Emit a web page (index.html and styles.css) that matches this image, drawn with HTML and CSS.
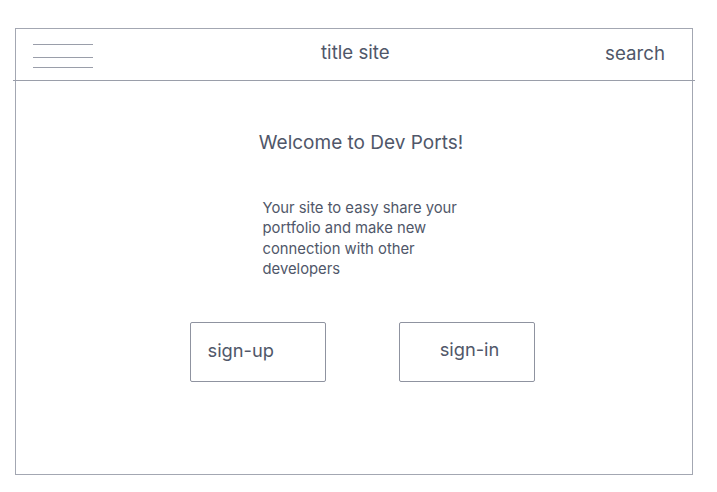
FILE: index.html
```html
<!DOCTYPE html>
<html>
<head>
<meta charset="utf-8">
<link rel="stylesheet" href="styles.css">
</head>
<body>
<div class="frame">
  <header class="header">
    <div class="burger"><span></span><span></span><span></span></div>
    <div class="title">title site</div>
    <div class="search">search</div>
  </header>
  <main class="main">
    <h1 class="welcome">Welcome to Dev Ports!</h1>
    <p class="intro">Your site to easy share your portfolio and make new connection with other developers</p>
    <div class="actions">
      <div class="btn btn-up">sign-up</div>
      <div class="btn btn-in">sign-in</div>
    </div>
  </main>
</div>
</body>
</html>
```

FILE: styles.css
```css
html, body {
  margin: 0;
  padding: 0;
  background: #ffffff;
}
body {
  font-family: Inter, "Noto Sans", sans-serif;
  color: #505769;
}
.frame {
  box-sizing: border-box;
  margin: 28px 0 0 15px;
  width: 678px;
  height: 447px;
  border: 1px solid #a3a7b2;
  display: flex;
  flex-direction: column;
}
.header {
  box-sizing: border-box;
  height: 52px;
  margin: 0 -3px;
  padding: 0 30px 0 20px;
  border-bottom: 1px solid #9a9eaa;
  display: flex;
  align-items: center;
}
.burger {
  width: 60px;
  display: flex;
  flex-direction: column;
  margin-top: 2px;
}
.burger span {
  display: block;
  height: 1px;
  background: #9a9eaa;
}
.burger span + span {
  margin-top: 12px;
}
.burger span + span + span {
  margin-top: 9px;
}
.title {
  font-size: 18.7px;
  margin-left: 228px;
  margin-top: -5px;
}
.search {
  font-size: 18.7px;
  margin-left: auto;
  margin-top: -2px;
}
.main {
  flex: 1;
  display: flex;
  flex-direction: column;
  align-items: center;
}
.welcome {
  margin: 50px 0 0 14px;
  font-size: 19px;
  font-weight: 400;
}
.intro {
  margin: 44px 0 0 17px;
  width: 200px;
  font-size: 14.8px;
  line-height: 20.3px;
}
.actions {
  margin: 43px 0 0 16px;
  display: flex;
  gap: 73px;
}
.btn {
  box-sizing: border-box;
  width: 136px;
  height: 60px;
  border: 1px solid #8f93a0;
  border-radius: 2px;
  display: flex;
  align-items: center;
  font-size: 18.3px;
}
.btn-up {
  padding-left: 17px;
  padding-bottom: 5px;
}
.btn-in {
  justify-content: center;
  padding-left: 6px;
  padding-bottom: 7px;
}
```
